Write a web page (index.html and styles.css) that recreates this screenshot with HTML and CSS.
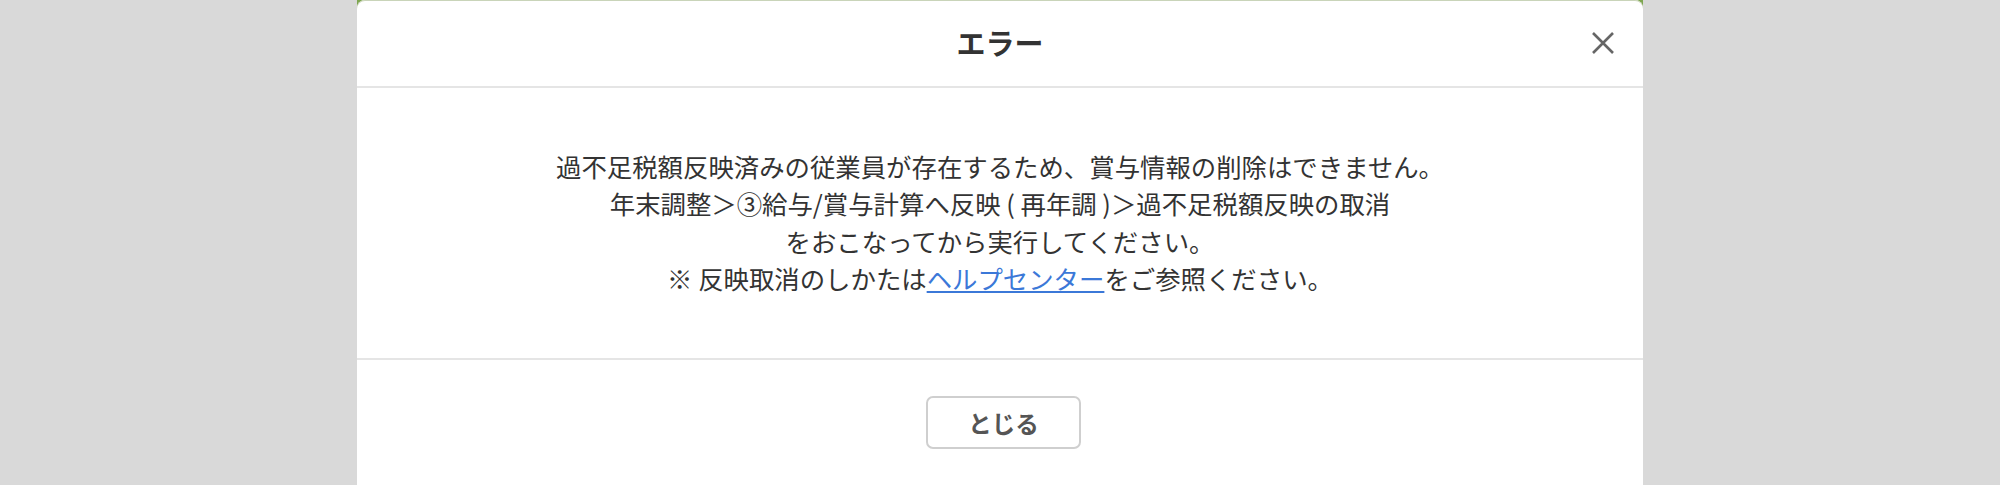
FILE: index.html
```html
<!DOCTYPE html>
<html>
	<head>
		<meta charset="UTF-8">
		<title>エラー</title>
		<link rel="stylesheet" href="styles.css">
	</head>
	<body>
		<div class="backdrop">
			<div class="modal">
				<div class="modal-header">
					<h2 class="modal-title">エラー</h2>
					<button class="modal-close" aria-label="閉じる">
						<svg width="26" height="26" viewBox="0 0 26 26"><path d="M3 3L23 23M23 3L3 23" stroke="#666" stroke-width="2.6" fill="none"/></svg>
					</button>
				</div>
				<div class="modal-body">
					<p>過不足税額反映済みの従業員が存在するため、賞与情報の削除はできません。<br>
					年末調整＞③給与/賞与計算へ反映 ( 再年調 )＞過不足税額反映の取消<br>
					をおこなってから実行してください。<br>
					※ 反映取消のしかたは<a href="#">ヘルプセンター</a>をご参照ください。</p>
				</div>
				<div class="modal-footer">
					<button class="btn-close">とじる</button>
				</div>
			</div>
		</div>
	</body>
</html>
```
FILE: styles.css
```css
*{
	margin:0;
	padding:0;
	box-sizing:border-box;
}
body{
	background:#d9d9d9;
	font-family:"Noto Sans CJK JP", "Noto Sans", sans-serif;
	color:#333;
	height:485px;
	overflow:hidden;
}
div.backdrop{
	width:1286px;
	margin:0 auto;
	background:linear-gradient(#7ea650 0, #7ea650 6px, transparent 6px);
}
div.modal{
	background:#fff;
	border-radius:8px 8px 0 0;
	box-shadow:inset 0 1px 0 #c9d4b9;
	height:520px;
}
div.modal-header{
	height:88px;
	border-bottom:2px solid #e5e5e5;
	display:flex;
	align-items:center;
	justify-content:center;
	position:relative;
}
h2.modal-title{
	font-size:29px;
	font-weight:bold;
	color:#333;
	margin-top:-2px;
}
button.modal-close{
	position:absolute;
	right:27px;
	top:30px;
	border:none;
	background:none;
	width:26px;
	height:26px;
	cursor:pointer;
}
button.modal-close svg{
	display:block;
}
div.modal-body{
	height:272px;
	border-bottom:2px solid #e5e5e5;
	display:flex;
	align-items:center;
	justify-content:center;
	text-align:center;
}
div.modal-body p{
	font-size:25.4px;
	line-height:37.5px;
	color:#333;
	margin-top:-1px;
}
div.modal-body a{
	color:#3b78d8;
	text-decoration:underline;
}
div.modal-footer{
	display:flex;
	justify-content:center;
	padding-top:36px;
	padding-left:7px;
}
button.btn-close{
	width:155px;
	height:53px;
	border:2px solid #cfcfcf;
	border-radius:7px;
	background:#fff;
	font-family:"Noto Sans CJK JP", "Noto Sans", sans-serif;
	font-size:23.5px;
	font-weight:bold;
	color:#555;
	cursor:pointer;
}
```
